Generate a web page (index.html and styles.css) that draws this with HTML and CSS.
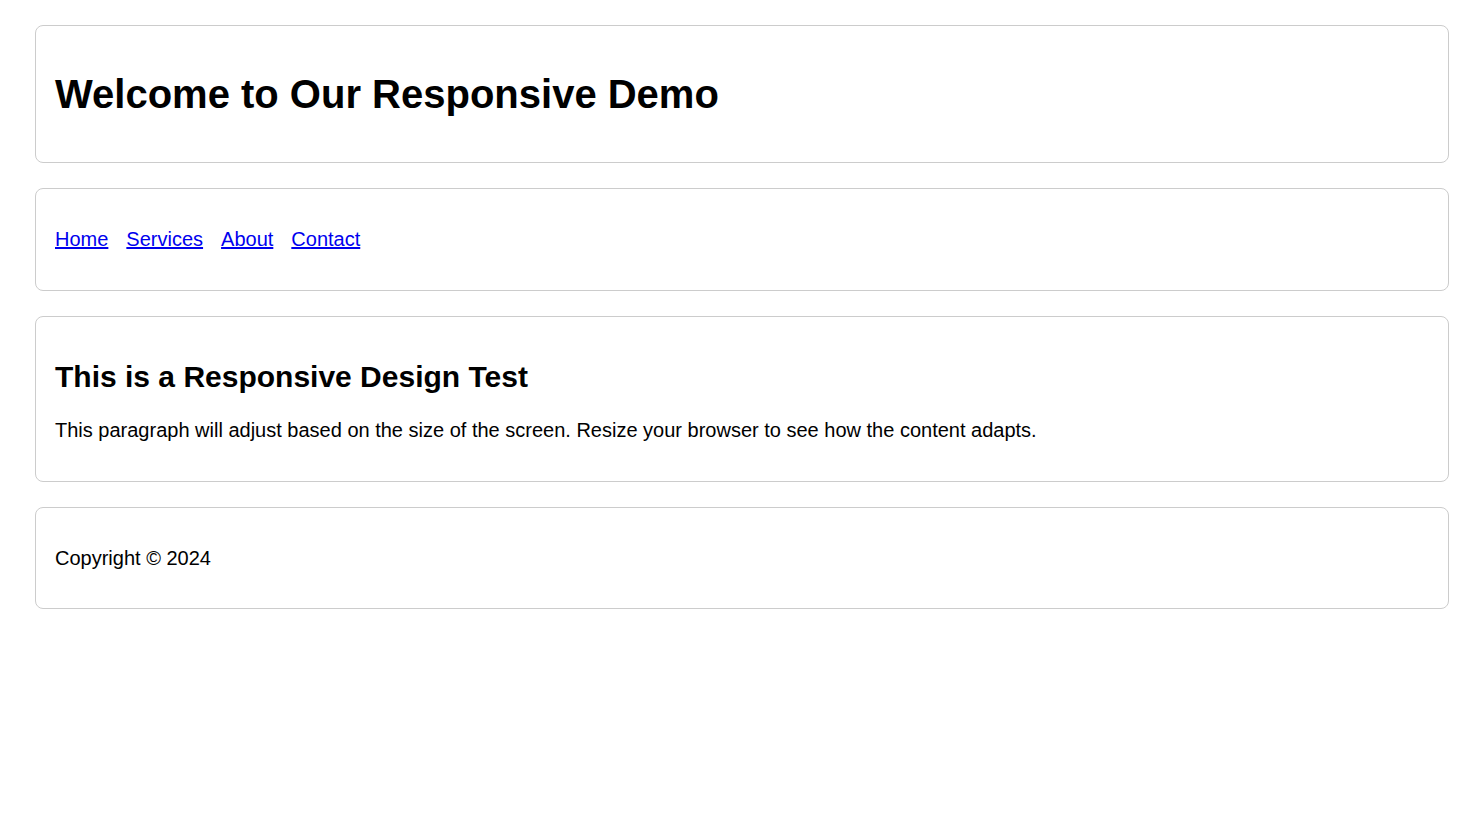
FILE: index.html
```html
<!DOCTYPE html>
<html lang="en">
<head>
<meta charset="utf-8">
<title>Responsive Demo</title>
<link rel="stylesheet" href="styles.css">
</head>
<body>
<div class="page">
  <header class="card">
    <h1 class="title">Welcome to Our Responsive Demo</h1>
  </header>
  <nav class="card">
    <ul class="nav-list">
      <li><a href="#">Home</a></li>
      <li><a href="#">Services</a></li>
      <li><a href="#">About</a></li>
      <li><a href="#">Contact</a></li>
    </ul>
  </nav>
  <main class="card">
    <h2 class="subtitle">This is a Responsive Design Test</h2>
    <p class="text">This paragraph will adjust based on the size of the screen. Resize your browser to see how the content adapts.</p>
  </main>
  <footer class="card">
    <p class="foot-text">Copyright © 2024</p>
  </footer>
</div>
</body>
</html>
```

FILE: styles.css
```css
html, body {
  margin: 0;
  padding: 0;
  background: #ffffff;
  color: #000000;
  font-family: "Liberation Sans", Arial, sans-serif;
}

.page {
  display: flex;
  flex-direction: column;
  gap: 25px;
  padding: 25px 35px;
}

.card {
  display: block;
  border: 1px solid #cccccc;
  border-radius: 8px;
  padding: 20px 19px;
}

.title {
  font-size: 40px;
  font-weight: bold;
  line-height: 46px;
  margin: 25px 0 25px;
}

.nav-list {
  list-style: none;
  margin: 19px 0 19px;
  padding: 0;
  display: flex;
  gap: 18px;
  font-size: 20px;
  line-height: 23px;
}

.nav-list a {
  color: #0000ee;
  text-decoration: underline;
}

.subtitle {
  font-size: 30px;
  font-weight: bold;
  line-height: 34px;
  margin: 23px 0 25px;
}

.text {
  font-size: 20px;
  line-height: 23px;
  margin: 0 0 19px;
}

.foot-text {
  font-size: 20px;
  line-height: 23px;
  margin: 19px 0 18px;
}
```
